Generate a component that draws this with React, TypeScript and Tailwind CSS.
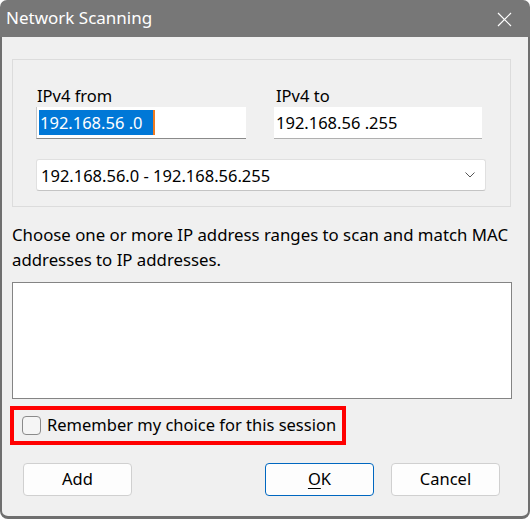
import React from 'react';

const font = { fontFamily: '"Noto Sans", "Open Sans", sans-serif' };

export default function App() {
  return (
    <div className="w-[530px] h-[519px] flex flex-col text-black" style={font}>
      {/* Title bar */}
      <div className="h-[37px] bg-[#777777] rounded-t-[7px] flex items-center justify-between pl-[6px] pr-[18px]">
        <span className="text-white text-[17px] leading-none -mt-[2px]">Network Scanning</span>
        <svg width="15" height="15" viewBox="0 0 15 15" className="mt-[1px]">
          <path d="M1 1 L14 14 M14 1 L1 14" stroke="#ffffff" strokeWidth="1.2" />
        </svg>
      </div>

      {/* Body */}
      <div className="flex-1 bg-[#f0f0f0] border-x-2 border-b-[3px] border-[#6f6f6f] rounded-b-[8px] pl-[10px] pt-[22px]">
        {/* Group box */}
        <div className="w-[499px] h-[148px] border border-[#dcdcdc] pl-[23px] pt-[25px]">
          <div className="flex">
            <div className="w-[210px]">
              <div className="h-[22px] text-[16.5px] leading-[22px] pl-[1px]">IPv4 from</div>
              <div className="h-[32px] bg-white border-b border-[#8a8a8a] border-l border-l-[#c8c8c8] flex items-center pl-[2px]">
                <span className="bg-[#0078d7] text-white text-[16.5px] leading-[25px] h-[25px] pl-[1px] w-[116px] border-r-2 border-[#f07b20]">192.168.56 .0</span>
              </div>
            </div>
            <div className="w-[208px] ml-[28px]">
              <div className="h-[22px] text-[16.5px] leading-[22px] pl-[2px]">IPv4 to</div>
              <div className="h-[32px] bg-white border-b border-[#b0b0b0] flex items-center pl-[2px]">
                <span className="text-[16.5px] leading-[25px]">192.168.56 .255</span>
              </div>
            </div>
          </div>
          <div className="mt-[20px] w-[450px] h-[32px] bg-white border border-[#e0e0e0] border-b-[#c4c4c4] rounded-[3px] flex items-center justify-between pl-[4px] pr-[10px]">
            <span className="text-[16.5px] leading-none mt-[2px]">192.168.56.0 - 192.168.56.255</span>
            <svg width="10" height="6" viewBox="0 0 10 6">
              <path d="M0.5 0.5 L5 5 L9.5 0.5" fill="none" stroke="#555555" strokeWidth="1" />
            </svg>
          </div>
        </div>

        {/* Description */}
        <p className="mt-[15px] text-[16.8px] leading-[25px] whitespace-nowrap">
          Choose one or more IP address ranges to scan and match MAC
          <br />
          addresses to IP addresses.
        </p>

        {/* Listbox */}
        <div className="mt-[10px] w-[500px] h-[117px] bg-white border border-[#848484]" />

        {/* Remember checkbox */}
        <div className="mt-[7px] -ml-[2px] w-[336px] h-[39px] border-[4px] border-[#ff0000] flex items-center pl-[8px]">
          <span className="w-[19px] h-[19px] rounded-[4px] border border-[#8a8a8a] bg-[#f5f5f5]" />
          <span className="ml-[6px] text-[16.5px] leading-none">Remember my choice for this session</span>
        </div>

        {/* Buttons */}
        <div className="mt-[18px] flex pl-[11px]">
          <button className="w-[109px] h-[33px] bg-[#fdfdfd] border border-[#d0d0d0] rounded-[4px] text-[16.5px]">Add</button>
          <button className="ml-[133px] w-[109px] h-[33px] bg-[#fdfdfd] border border-[#0067c0] rounded-[4px] text-[16.5px]">
            <span className="underline underline-offset-[3px] decoration-1">O</span>K
          </button>
          <button className="ml-[17px] w-[109px] h-[33px] bg-[#fdfdfd] border border-[#d0d0d0] rounded-[4px] text-[16.5px]">Cancel</button>
        </div>
      </div>
    </div>
  );
}
